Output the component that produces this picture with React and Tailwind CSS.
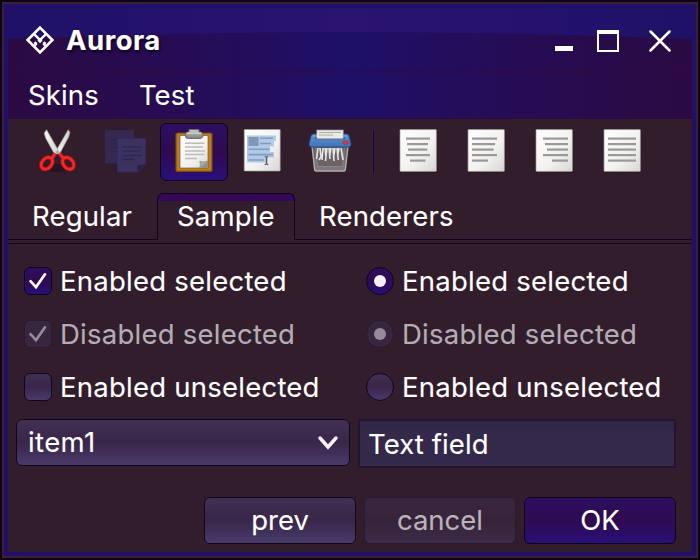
import React from "react";

const Grad = ({ id, stops, x2 = 0, y2 = 1 }) => (
  <linearGradient id={id} x1="0" y1="0" x2={x2} y2={y2}>
    {stops.map(([o, c]) => (
      <stop key={o} offset={o} stopColor={c} />
    ))}
  </linearGradient>
);

function HeaderArt() {
  return (
    <svg className="absolute inset-0" width="684" height="111" viewBox="0 0 684 111">
      <defs>
        <Grad id="low" x2={1} y2={0} stops={[[0, "#2b0a42"], [0.25, "#260c54"], [0.5, "#1e1068"], [0.75, "#260c54"], [1, "#2b0a42"]]} />
        <Grad id="up" x2={1} y2={0} stops={[[0, "#1f1168"], [0.5, "#2a1371"], [1, "#1f1168"]]} />
      </defs>
      <rect width="684" height="111" fill="url(#low)" />
      <path d="M0 0H684V31Q513 24 342 24Q171 24 0 31Z" fill="url(#up)" />
      <rect y="62" width="684" height="1.6" fill="#34093f" opacity="0.75" />
      <rect y="109.4" width="684" height="1.6" fill="#34093f" opacity="0.6" />
    </svg>
  );
}

function Logo() {
  return (
    <svg width="30" height="30" viewBox="0 0 30 30" fill="none" stroke="#fff">
      <path d="M15 2.6L27.4 15L15 27.4L2.6 15Z" strokeWidth="2.6" />
      <path d="M9.4 9.4L15 15L20.6 9.4" strokeWidth="2.4" />
      <path d="M15 12.5L17.6 15.6L15 18.2L12.4 15.6Z" fill="#fff" stroke="none" />
      <path d="M9.6 17.2L11.4 19M20.4 17.2L18.6 19" strokeWidth="2.6" />
      <path d="M11.8 18.4L9.6 20.6M18.2 18.4L20.4 20.6" strokeWidth="2.4" />
    </svg>
  );
}

function Cut() {
  return (
    <svg className="overflow-visible" width="40" height="46" viewBox="0 0 40 46">
      <defs>
        <Grad id="blade" x2={1} y2={0} stops={[[0, "#f7f7f5"], [1, "#d0d1cc"]]} />
      </defs>
      <ellipse cx="20.5" cy="40" rx="13" ry="4" fill="#1f121c" opacity="0.7" />
      <path d="M31.2 1.8L32.9 4.5L31.6 9L22.5 26L17.5 25.5Z" fill="url(#blade)" stroke="#a2a39e" strokeWidth="0.7" />
      <path d="M9.6 1.8L7.2 5L8.6 10L17.5 26L22.5 25L20.5 21Z" fill="url(#blade)" stroke="#a2a39e" strokeWidth="0.7" />
      <g fill="none" stroke="#b80f12" strokeWidth="4.2">
        <ellipse cx="9.8" cy="35.3" rx="4.8" ry="6.6" transform="rotate(42 9.8 35.3)" />
        <ellipse cx="31.2" cy="35.3" rx="4.8" ry="6.6" transform="rotate(-42 31.2 35.3)" />
        <path d="M14.8 30.3L18.3 25.5M26.2 30.3L22.5 25.5" />
      </g>
      <g fill="none" stroke="#ef2a2a" strokeWidth="2.6">
        <ellipse cx="9.8" cy="35.3" rx="4.8" ry="6.6" transform="rotate(42 9.8 35.3)" />
        <ellipse cx="31.2" cy="35.3" rx="4.8" ry="6.6" transform="rotate(-42 31.2 35.3)" />
        <path d="M14.8 30.3L18.3 25.5M26.2 30.3L22.5 25.5" />
      </g>
      <circle cx="20.2" cy="24" r="0.9" fill="#8a8b86" />
    </svg>
  );
}

function Copy() {
  return (
    <svg width="44" height="46" viewBox="1 0 44 46">
      <rect x="2.5" y="2.5" width="28" height="32.5" fill="#35294f" stroke="#30265c" />
      <path d="M7 11.5H24M7 15.5H24M7 19.5H24M7 23.5H20" stroke="#302448" strokeWidth="1.3" />
      <path d="M14.5 10.5H42.5V36L35 44H14.5Z" fill="#3c3260" stroke="#30286a" />
      <path d="M42 36.5L34.5 43.5V37.5Z" fill="#292049" />
      <path d="M19 19H39M19 23H37M19 27.5H39M19 31.5H31" stroke="#2f2750" strokeWidth="1.5" />
    </svg>
  );
}

function Paste() {
  return (
    <svg width="40" height="46" viewBox="0 0 40 46">
      <defs>
        <Grad id="paper" x2={1} stops={[[0, "#ffffff"], [0.6, "#f1f1f0"], [1, "#d7d7d5"]]} />
        <Grad id="clip" stops={[[0, "#c9cac3"], [1, "#7f8178"]]} />
      </defs>
      <rect x="2" y="5" width="36" height="38.4" rx="1.5" fill="#bc7b1d" stroke="#7b4b0a" strokeWidth="1.2" />
      <path d="M6 7.5H34V40H6Z" fill="url(#paper)" stroke="#6f6144" strokeWidth="0.7" />
      <path d="M34 33V40H25.5Z" fill="#91928d" />
      <path d="M25.5 40Q27 37 25.8 33.2Q30 34.5 34 33Z" fill="#a9aaa6" stroke="#858682" strokeWidth="0.5" />
      <path d="M11 15.3H30.5M11 19H29M11 23H31M11 26.6H30.5M11 30.5H23" stroke="#bbbcba" strokeWidth="1.5" />
      <path d="M15 1.5H25V4H27Q29 4.5 29 8Q28.5 10.5 26 10.5H14Q11.5 10.5 11.2 8Q11.2 4.5 13.5 4H15Z" fill="url(#clip)" stroke="#686a60" strokeWidth="0.9" />
      <path d="M13 5.2H27" stroke="#dedfd8" strokeWidth="1" />
    </svg>
  );
}

function SelectAll() {
  return (
    <svg width="40" height="46" viewBox="0 0 40 46">
      <rect x="2" y="2" width="36.6" height="42.3" rx="1" fill="#1a1019" opacity="0.6" />
      <rect x="2.2" y="1.5" width="36" height="41.6" rx="0.5" fill="url(#paper)" stroke="#989991" strokeWidth="0.7" />
      <path d="M5 7.5H34V13H32V18.5H28V24H32V29.5H26V34.5H5Z" fill="#b0cbe6" />
      <rect x="6.5" y="9" width="10" height="9" fill="#8098b5" />
      <path d="M18 10.2H31M18 15.5H29M6.5 21.2H27.5M6.5 26.6H31M6.5 32H22" stroke="#819bc0" strokeWidth="1.6" />
      <path d="M22.7 28.5Q24.5 28.5 24.5 30V35Q24.5 36.6 22.7 36.6M26.3 28.5Q24.5 28.5 24.5 30M24.5 35Q24.5 36.6 26.3 36.6" stroke="#5b5c5a" strokeWidth="1.2" fill="none" />
    </svg>
  );
}

function Shred() {
  return (
    <svg width="44" height="46" viewBox="0 0 44 46">
      <defs>
        <Grad id="blue" stops={[[0, "#5b93d0"], [1, "#3f73b8"]]} />
        <Grad id="bin" stops={[[0, "#615960"], [1, "#817a80"]]} />
      </defs>
      <path d="M4 18H40L37.3 42Q37 43 35.5 43H8.5Q7 43 6.7 42Z" fill="url(#bin)" stroke="#afafac" strokeWidth="1.4" />
      <path d="M7.5 18L9.3 38.5H34.7L36.5 18Z" fill="#6b6268" stroke="#918c8d" strokeWidth="0.8" />
      <path d="M3 8Q3.5 6 5.5 6H38.5Q40.5 6 41 8L43 16Q43 19 40 19H4Q1 19 1 16Z" fill="url(#blue)" stroke="#244d86" strokeWidth="1" />
      <path d="M4.5 8H39.5" stroke="#76a8dc" strokeWidth="1" />
      <rect x="7.5" y="9.2" width="29" height="2" fill="#173761" />
      <rect x="8.8" y="2" width="26.4" height="8.8" fill="#e9e9e7" stroke="#999a97" strokeWidth="0.7" />
      <path d="M11 4.5H33M11 7H25" stroke="#adaeab" strokeWidth="1.1" />
      <ellipse cx="37.5" cy="14.6" rx="2.8" ry="1.8" fill="#df3b40" stroke="#8b233c" strokeWidth="0.6" />
      <path d="M10 20L8.6 31M12 20L13 29L11 32M15 20L14 32M17 20L18 29M19 20L17.5 33M21 20L22 31M23 20L21.5 29M25 20L26 33M27 20L25.5 30M29 20L30.3 32M31 20L29.5 28M33 20L35 32" stroke="#e7e7e5" strokeWidth="1.6" fill="none" />
    </svg>
  );
}

function Align({ lines }) {
  return (
    <svg width="40" height="46" viewBox="0 0 40 46">
      <rect x="2" y="2.5" width="36.6" height="42.2" rx="1" fill="#180e17" opacity="0.55" />
      <rect x="2" y="1.6" width="36.4" height="41.8" rx="0.7" fill="url(#paper)" stroke="#989991" strokeWidth="0.7" />
      {lines.map(([a, b], i) => (
        <rect key={i} x={a} y={9.5 + i * 5.5} width={b - a} height="2.2" fill="#999998" />
      ))}
    </svg>
  );
}

const CENTER = [[8, 32], [9, 30], [10, 29.3], [8, 32], [12, 27.5]];
const LEFT = [[6, 31], [6, 29], [6, 27.7], [6, 31], [6, 22]];
const RIGHT = [[9, 34], [11, 34], [13, 34], [9, 34], [18, 34]];
const FULL = [[6, 34], [6, 34], [6, 34], [6, 34], [6, 34]];

const ACTIVE = "bg-[linear-gradient(#2d0e60,#2f0a50_50%,#281078)] border-[#0f031c]";
const PLAIN = "bg-[linear-gradient(#403052,#39264a_50%,#483a6a)] border-[#12061f]";

function Mark({ round, on, off }) {
  return (
    <span className={`flex size-7 shrink-0 items-center justify-center border ${round ? "rounded-full" : "rounded-md"} ${off ? "border-[#281a33] bg-[#38263f]" : on ? ACTIVE : PLAIN}`}>
      {on && (round ? (
        <span className={`size-3 rounded-full ${off ? "bg-[#978a9a]" : "bg-[#f5f2f7]"}`} />
      ) : (
        <svg width="20" height="20" viewBox="0 0 20 20" fill="none" stroke={off ? "#978a9a" : "#fff"} strokeWidth="2.7" strokeLinecap="round">
          <path d="M2.5 10.2L8 16.1L17 3.3" />
        </svg>
      ))}
    </span>
  );
}

function Option({ label, round, on, off }) {
  return (
    <div className="flex h-[53px] items-center gap-2">
      <Mark round={round} on={on} off={off} />
      <span className={`tracking-[0.24px] ${off ? "text-[#b4adb4]" : ""}`}>{label}</span>
    </div>
  );
}

function Column({ round }) {
  return (
    <div>
      <Option label="Enabled selected" round={round} on />
      <Option label="Disabled selected" round={round} on off />
      <Option label="Enabled unselected" round={round} />
    </div>
  );
}

export default function App() {
  return (
    <div className="h-[560px] w-[700px] overflow-hidden bg-[#0d021a] p-[2px] font-['Inter',sans-serif] text-[27.5px] leading-8 whitespace-nowrap text-white [-webkit-text-stroke:0.1px]">
      <div className="h-full border-2 border-[#38202f] bg-[#20106a] p-1">
        <div className="flex h-full flex-col bg-[#321d2d]">
          <header className="relative h-[111px] shrink-0">
            <HeaderArt />
            <div className="relative flex h-[62px] items-center pt-[2px] pr-[19px] pl-[17px]">
              <Logo />
              <h1 className="ml-[11px] flex-1 font-bold tracking-[0.5px] [text-shadow:1px_2px_3px_#08001a]">Aurora</h1>
              <svg width="118" height="24" viewBox="0 0 118 24" fill="none" stroke="#fff">
                <path d="M0 20.5H18" strokeWidth="5" />
                <path d="M43 3V23H63V3" strokeWidth="2" />
                <path d="M42 4H64" strokeWidth="4" />
                <path d="M95.5 3.5L114.5 22.5M114.5 3.5L95.5 22.5" strokeWidth="2.5" strokeLinecap="round" />
              </svg>
            </div>
            <nav className="relative flex gap-[40px] pt-[9px] pl-5 tracking-[0.14px]">
              <span>Skins</span>
              <span>Test</span>
            </nav>
          </header>
          <div className="flex h-[74px] shrink-0 pt-1">
            <div className="flex w-[84px] justify-center pl-[14px] pt-[5px]"><Cut /></div>
            <div className="flex w-[68px] justify-center pt-[5px]"><Copy /></div>
            <div className={`flex h-[58px] w-[68px] justify-center rounded-md border pt-[4px] ${ACTIVE}`}><Paste /></div>
            <div className="flex w-[68px] justify-center pt-[5px]"><SelectAll /></div>
            <div className="flex w-[68px] justify-center pt-[5px]"><Shred /></div>
            <div className="mt-[7px] mr-[24px] ml-[8px] h-[43px] w-[2px] border-r border-[#130722] bg-[#2c215d]" />
            <div className="flex gap-[28px] pt-[5px]">
              <Align lines={CENTER} /><Align lines={LEFT} /><Align lines={RIGHT} /><Align lines={FULL} />
            </div>
          </div>
          <div className="flex h-[51px] shrink-0 border-b border-[#0f0320] pb-[3px] tracking-[0.16px]">
            <div className="w-[149px] border-b border-[#0f0320] pt-[7px] pl-6">Regular</div>
            <div className="w-[138px] rounded-t-md border border-b-0 border-[#0f0320] bg-[linear-gradient(#330957_7px,transparent_7px)] pt-[6px] pl-[19px]">Sample</div>
            <div className="flex-1 border-b border-[#0f0320] pt-[7px] pl-6">Renderers</div>
          </div>
          <main className="flex flex-1 flex-col">
            <div className="grid grid-cols-[342px_auto] pt-[10px] pl-4">
              <Column />
              <Column round />
            </div>
            <div className="mt-[6px] flex gap-2 pl-2">
              <div className={`flex h-[47px] w-[334px] items-center justify-between rounded-md border pr-[10px] pl-[11px] ${PLAIN}`}>
                <span className="pb-[2px] tracking-[0.4px]">item1</span>
                <svg width="22" height="16" viewBox="0 0 22 16" fill="none" stroke="#f5f2f7" strokeWidth="3.5" strokeLinecap="round">
                  <path d="M3 3L11 12L19 3" />
                </svg>
              </div>
              <div className="flex h-[49px] w-[318px] items-center border-2 border-[#211532] bg-[linear-gradient(#302447,#34284b_12px)] pl-[8px] tracking-[0.1px]">Text field</div>
            </div>
            <div className="mt-[29px] flex justify-end gap-2 pr-4">
              <div className={`flex h-[47px] w-[152px] items-center justify-center rounded-md border pb-[2px] ${PLAIN}`}>prev</div>
              <div className="flex h-[47px] w-[152px] items-center justify-center rounded-md border border-[#281a33] bg-[linear-gradient(#3a2740,#372339_50%,#3c2a48)] pb-[2px] text-[#b9b3ba]">cancel</div>
              <div className={`flex h-[47px] w-[152px] items-center justify-center rounded-md border pb-[2px] ${ACTIVE}`}>OK</div>
            </div>
          </main>
        </div>
      </div>
    </div>
  );
}
